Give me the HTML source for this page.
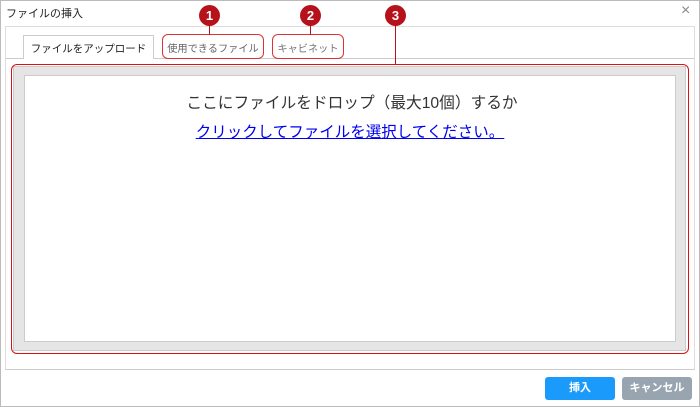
<!DOCTYPE html><html><head><meta charset="utf-8"><style>
body{margin:0;width:700px;height:407px;background:#fff;font-family:"Liberation Sans","Noto Sans CJK JP",sans-serif;position:relative;overflow:hidden}
.a{position:absolute;box-sizing:border-box}
.c{width:21px;height:21px;border-radius:50%;background:#b5121b;color:#fff;font-size:13px;font-weight:bold;text-align:center;line-height:21px}
.t{display:flex;align-items:center;justify-content:center}
</style></head><body>
<div class="a" style="left:0;top:0;width:700px;height:407px;border:1px solid #bbb"></div>
<div class="a" style="left:6px;top:5px;font-size:11px;color:#222">ファイルの挿入</div>
<div class="a" style="left:681px;top:2px;font-size:16px;color:#888">×</div>
<div class="a" style="left:5px;top:26px;width:690px;height:344px;border:1px solid #ddd;border-bottom:1px solid #ccc"></div>
<div class="a" style="left:6px;top:58px;width:688px;height:1px;background:#ccc"></div>
<div class="a t" style="left:23px;top:35px;width:131px;height:24px;border:1px solid #ccc;border-bottom:none;background:#fff;font-size:10.5px;color:#222;padding-top:2px">ファイルをアップロード</div>
<div class="a t" style="left:162px;top:34px;width:102px;height:25px;border:1.5px solid #d33;border-radius:6px;font-size:10.2px;color:#666;padding-top:1px">使用できるファイル</div>
<div class="a t" style="left:272px;top:34px;width:72px;height:25px;border:1.5px solid #d33;border-radius:6px;font-size:10.2px;color:#777;padding-top:1px">キャビネット</div>
<div class="a" style="left:13px;top:66px;width:673px;height:285px;background:#e5e5e5;border:1px solid #ccc"></div>
<div class="a" style="left:24px;top:75px;width:652px;height:267px;background:#fff;border:1px solid #ccc"></div>
<div class="a" style="left:11px;top:64px;width:678px;height:290px;border:1.5px solid #d11;border-radius:6px"></div>
<div class="a" style="left:26px;top:90px;width:652px;text-align:center;font-size:15.7px;color:#333">ここにファイルをドロップ（最大10個）するか</div>
<div class="a" style="left:24px;top:120px;width:652px;text-align:center;font-size:15.5px;color:#00e"><span style="text-decoration:underline">クリックしてファイルを選択してください。</span></div>
<div class="a" style="left:209px;top:15px;width:1px;height:20px;background:#b5121b"></div>
<div class="a" style="left:310px;top:15px;width:1px;height:20px;background:#b5121b"></div>
<div class="a" style="left:395px;top:15px;width:1px;height:50px;background:#b5121b"></div>
<div class="a c" style="left:199px;top:5px">1</div>
<div class="a c" style="left:300px;top:5px">2</div>
<div class="a c" style="left:385px;top:5px">3</div>
<div class="a" style="left:545px;top:377px;width:70px;height:23px;background:#1a9bfc;border-radius:3px;color:#fff;font-size:11px;font-weight:bold;text-align:center;line-height:23px">挿入</div>
<div class="a" style="left:622px;top:377px;width:70px;height:23px;background:#98a4b0;border-radius:3px;color:#fff;font-size:11px;font-weight:bold;text-align:center;line-height:23px">キャンセル</div>
</body></html>
